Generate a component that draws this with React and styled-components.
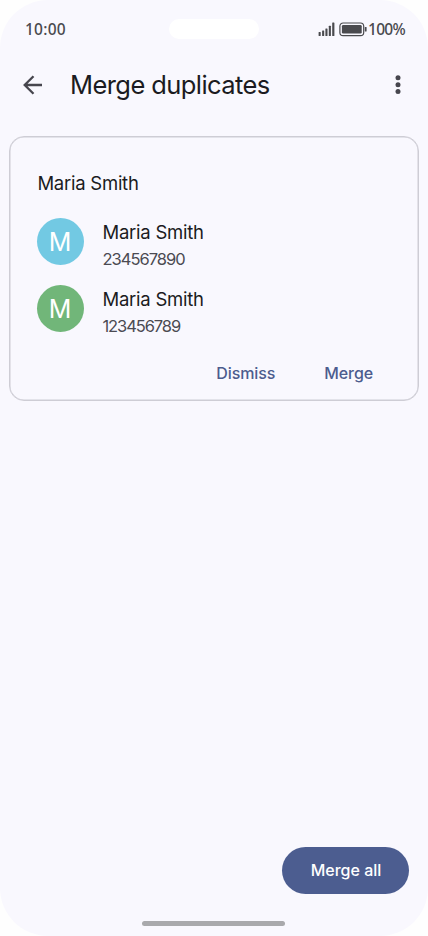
import React from 'react';
import styled, { createGlobalStyle } from 'styled-components';

const GlobalStyle = createGlobalStyle`
  * {
    box-sizing: border-box;
  }

  body {
    margin: 0;
    background: #fefefe;
    font-family: Inter, Roboto, sans-serif;
  }

  button {
    padding: 0;
    border: 0;
    background: none;
    font-family: inherit;
  }
`;

const Screen = styled.div`
  display: flex;
  flex-direction: column;
  width: 428px;
  height: 936px;
  overflow: hidden;
  border-radius: 48px;
  background: #f9f8fe;
  color: #1b1b21;
`;

const StatusBar = styled.div`
  display: grid;
  grid-template-columns: 1fr 90px 1fr;
  align-items: center;
  height: 58px;
  padding: 0 23px 0 25px;
  color: #4a4a4e;
  font-family: 'Noto Sans', sans-serif;
  font-size: 15.5px;
  font-weight: 500;
`;

const Camera = styled.div`
  height: 20px;
  margin: 0 1px 0 -1px;
  border-radius: 10px;
  background: #fff;
`;

const StatusIcons = styled.div`
  display: flex;
  align-items: center;
  justify-content: flex-end;
`;

const Label = styled.span`
  display: block;
  font-size: ${({ $size }) => $size}px;
  line-height: ${({ $line }) => $line || 24}px;
  letter-spacing: ${({ $spacing }) => $spacing || 0}px;
  white-space: nowrap;
`;

const AppBar = styled.header`
  display: flex;
  align-items: center;
  height: 54px;
  padding: 0 18.5px 0 21px;
  color: #47464e;
`;

const IconButton = styled.button`
  display: flex;
  color: inherit;
`;

const Title = styled.h1`
  flex: 1;
  margin: 0 0 0 25px;
  color: #1b1b21;
  font-weight: 400;
`;

const Card = styled.section`
  display: flex;
  flex-direction: column;
  height: 265px;
  margin: 24px 9px 0;
  padding: 34px 45px 15px 27.4px;
  border: 1px solid #cecdd5;
  border-radius: 15px;
  box-shadow: inset 0 0 0 0.5px #cecdd5;
`;

const Contacts = styled.div`
  display: flex;
  flex-direction: column;
  gap: 13px;
  margin-top: 18px;
`;

const Contact = styled.div`
  display: flex;
  align-items: flex-start;
  height: 54px;
`;

const Avatar = styled.div`
  display: flex;
  align-items: center;
  justify-content: center;
  width: 47px;
  height: 47px;
  margin: 5px 19px 0 -0.9px;
  border-radius: 50%;
  background: ${({ $color }) => $color};
  color: #fff;
  font-weight: 400;
`;

const Details = styled.div`
  padding-top: 7px;
`;

const Phone = styled.div`
  margin-top: 3px;
  color: #4b4a52;
`;

const Actions = styled.div`
  display: flex;
  justify-content: flex-end;
  gap: 49px;
  margin-top: auto;
`;

const TextButton = styled.button`
  color: #4c5c8e;
  font-weight: 500;
`;

const Footer = styled.footer`
  display: flex;
  flex-direction: column;
  align-items: center;
  margin-top: auto;
  padding: 0 1px 10px 0;
`;

const MergeAll = styled.button`
  align-self: flex-end;
  width: 127px;
  height: 47px;
  margin: 0 18px 27px 0;
  padding: 0 0 1px 1px;
  border-radius: 24px;
  background: #4c5d90;
  color: #fff;
  font-weight: 500;
`;

const HomeBar = styled.div`
  width: 143px;
  height: 5px;
  border-radius: 3px;
  background: #a9a9ac;
`;

const contacts = [
  { name: 'Maria Smith', phone: '234567890', color: '#72c9e3', spacing: -1 },
  { name: 'Maria Smith', phone: '123456789', color: '#71b679', spacing: -1.1 },
];

function Signal() {
  return (
    <svg width="17" height="15" viewBox="0 0 17 15" fill="currentColor">
      <rect x="0.6" y="10" width="2.1" height="4" rx="0.5" />
      <rect x="4.1" y="8.4" width="2.1" height="5.6" rx="0.5" />
      <rect x="7.4" y="6.6" width="2.1" height="7.4" rx="0.5" />
      <rect x="10.8" y="3.8" width="2.1" height="10.2" rx="0.5" />
      <rect x="14.2" y="0.4" width="2.2" height="13.6" rx="0.5" />
    </svg>
  );
}

function Battery() {
  return (
    <svg width="33" height="15" viewBox="0 0 33 15">
      <rect x="4.9" y="1" width="23.8" height="12.6" rx="3.2" fill="none" stroke="currentColor" strokeWidth="1.2" />
      <rect x="6.9" y="3" width="19.8" height="8.6" rx="1.3" fill="currentColor" />
      <rect x="29.8" y="5" width="1.8" height="4.6" rx="0.6" fill="currentColor" />
    </svg>
  );
}

function App() {
  return (
    <>
      <GlobalStyle />
      <Screen>
        <StatusBar>
          <Label $size={15.5} $spacing={0.25}>10:00</Label>
          <Camera />
          <StatusIcons>
            <Signal />
            <Battery />
            <Label $size={15.5} $spacing={-0.7}>100%</Label>
          </StatusIcons>
        </StatusBar>

        <AppBar>
          <IconButton aria-label="Back">
            <svg width="24" height="24" viewBox="0 0 24 24" fill="none" stroke="currentColor" strokeWidth="2.3">
              <path d="M21 12H4M12.5 3.2L3.7 12l8.8 8.8" />
            </svg>
          </IconButton>
          <Title>
            <Label $size={25.5} $line={32} $spacing={-0.58}>Merge duplicates</Label>
          </Title>
          <IconButton aria-label="More options">
            <svg width="24" height="24" viewBox="0 0 24 24" fill="currentColor">
              <circle cx="12" cy="4.8" r="2.5" />
              <circle cx="12" cy="11.7" r="2.5" />
              <circle cx="12" cy="18.6" r="2.5" />
            </svg>
          </IconButton>
        </AppBar>

        <Card>
          <Label $size={18.5} $spacing={-0.25}>Maria Smith</Label>
          <Contacts>
            {contacts.map(({ name, phone, color, spacing }) => (
              <Contact key={phone}>
                <Avatar $color={color}>
                  <Label $size={25} $line={30}>{name[0]}</Label>
                </Avatar>
                <Details>
                  <Label $size={18.5} $spacing={-0.25}>{name}</Label>
                  <Phone>
                    <Label $size={16.5} $spacing={spacing}>{phone}</Label>
                  </Phone>
                </Details>
              </Contact>
            ))}
          </Contacts>
          <Actions>
            <TextButton><Label $size={16} $spacing={-0.1}>Dismiss</Label></TextButton>
            <TextButton><Label $size={16} $spacing={-0.1}>Merge</Label></TextButton>
          </Actions>
        </Card>

        <Footer>
          <MergeAll><Label $size={16}>Merge all</Label></MergeAll>
          <HomeBar />
        </Footer>
      </Screen>
    </>
  );
}

export default App;
